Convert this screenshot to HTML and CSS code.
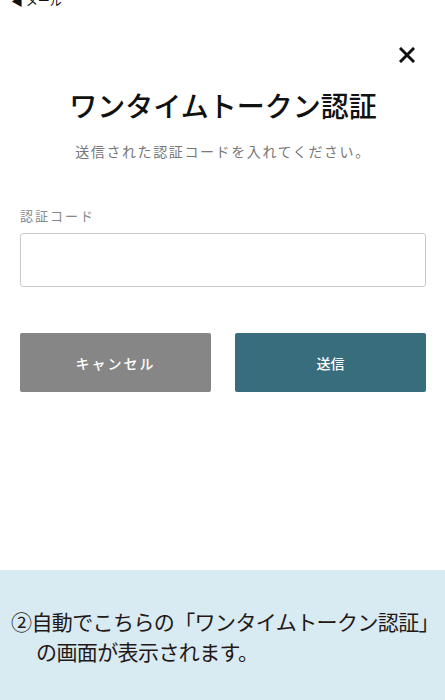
FILE: index.html
```html
<!DOCTYPE html>
<html lang="ja">
<head>
<meta charset="utf-8">
<link rel="stylesheet" href="styles.css">
</head>
<body>
<div class="page">
  <div class="status">◀ メール</div>
  <main class="modal">
    <div class="close-row">
      <svg class="close" width="16" height="16" viewBox="0 0 16 16" aria-hidden="true">
        <path d="M2 2L14 14M14 2L2 14" stroke="#111" stroke-width="3" stroke-linecap="square"/>
      </svg>
    </div>
    <h1 class="title">ワンタイムトークン認証</h1>
    <p class="subtitle">送信された認証コードを入れてください。</p>
    <label class="label" for="code">認証コード</label>
    <input class="input" id="code" type="text">
    <div class="buttons">
      <button class="btn btn-cancel">キャンセル</button>
      <button class="btn btn-send">送信</button>
    </div>
  </main>
  <footer class="panel">
    <p class="note"><span class="line1">②自動でこちらの「ワンタイムトークン認証」</span><span class="line2">の画面が表示されます。</span></p>
  </footer>
</div>
</body>
</html>
```
FILE: styles.css
```css
* { box-sizing: border-box; }
html, body { margin: 0; padding: 0; background: #fff; }
body {
  font-family: "Noto Sans CJK JP", "Noto Sans", sans-serif;
  color: #111;
}
.page {
  width: 445px;
  height: 700px;
  display: flex;
  flex-direction: column;
  overflow: hidden;
}
.status {
  height: 8px;
  margin-top: -6px;
  padding-left: 11px;
  font-size: 12px;
  line-height: 14px;
  color: #111;
  white-space: nowrap;
}
.modal {
  padding: 0 19px 0 20px;
  display: flex;
  flex-direction: column;
}
.close-row {
  display: flex;
  justify-content: flex-end;
  padding-top: 45px;
  padding-right: 11px;
}
.close { display: block; }
.title {
  margin: 22px 0 0;
  text-align: center;
  font-size: 28px;
  font-weight: 500;
  line-height: 40px;
  color: #111;
}
.subtitle {
  margin: 16px 0 0;
  text-align: center;
  font-size: 14px;
  letter-spacing: 1.6px;
  line-height: 20px;
  color: #777;
}
.label {
  display: block;
  margin-top: 45px;
  font-size: 13px;
  letter-spacing: 2px;
  line-height: 20px;
  color: #888;
}
.input {
  display: block;
  width: 100%;
  height: 54px;
  margin-top: 7px;
  border: 1px solid #c8c8c8;
  border-radius: 3px;
  background: #fff;
  font-size: 14px;
}
.buttons {
  display: grid;
  grid-template-columns: 1fr 1fr;
  gap: 24px;
  margin-top: 46px;
}
.btn {
  height: 59px;
  border: none;
  border-radius: 2px;
  color: #fff;
  font-family: inherit;
  font-size: 14px;
  font-weight: 500;
}
.btn-cancel { background: #868686; letter-spacing: 2px; }
.btn-send { background: #386d7e; letter-spacing: 0; }
.panel {
  margin-top: auto;
  height: 130px;
  background: #d8eaf2;
  padding-top: 36px;
}
.note {
  margin: 0;
  font-size: 21px;
  line-height: 30px;
  color: #231815;
}
.line1 { display: block; padding-left: 11px; white-space: nowrap; letter-spacing: -0.6px; }
.line2 { display: block; padding-left: 36px; letter-spacing: -0.6px; }
```
